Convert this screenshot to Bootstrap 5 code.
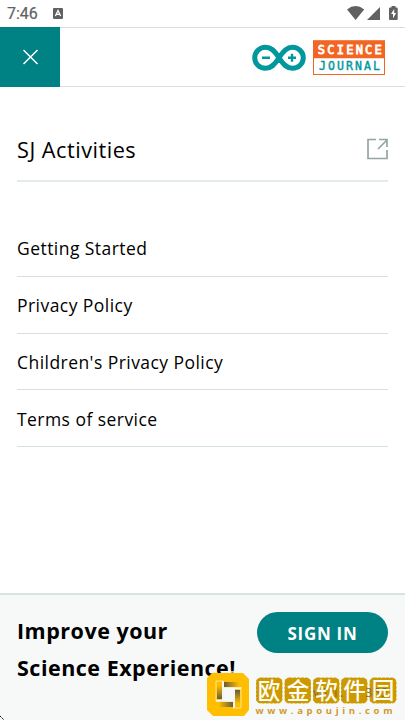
<!DOCTYPE html>
<html lang="en">
<head>
<meta charset="utf-8">
<meta name="viewport" content="width=device-width, initial-scale=1">
<title>Science Journal</title>
<link href="https://cdn.jsdelivr.net/npm/bootstrap@5.3.0/dist/css/bootstrap.min.css" rel="stylesheet">
<style>
body{font-family:"Open Sans","Noto Sans",sans-serif;color:#000;background:#fff;height:720px;overflow:hidden}
.status{height:27px;font:400 16px/28px Roboto,sans-serif;color:#616161;padding-left:7px;-webkit-text-stroke:.2px #616161}
.topbar{height:60px;border-top:1px solid #d5e1e1;border-bottom:1px solid #d5e1e1}
.close-btn{width:60px;height:60px;margin-top:-1px;padding-left:1px;background:#008184}
.menu{padding:0 17px}
.menu-line{border-bottom:1px solid #d5e1e1}
.menu-main{height:95px;border-bottom:2px solid #e2eaea;font-size:21.7px;letter-spacing:.5px;padding-top:31px}
.menu-main span{padding-top:2px}
.menu-item{height:56.75px;font-size:17.5px;letter-spacing:.45px;padding-top:1px}
.menu-list{padding-top:38px}
.signin-bar{height:127px;border-top:2px solid #dae3e3;background:#f7f9f9;padding:17px 17px 0}
.promo{font-size:21.5px;font-weight:700;line-height:37px;letter-spacing:.5px;white-space:nowrap}
.promo-text{width:240px}
.signin{width:131px;height:41px;background:#008184;font-size:17px;font-weight:700;letter-spacing:.7px;padding-top:2px!important}
.seal{left:204px;top:669px}
</style>
<script src="https://cdn.jsdelivr.net/npm/bootstrap@5.3.0/dist/js/bootstrap.bundle.min.js"></script>
</head>
<body class="d-flex flex-column position-relative">
<div class="status d-flex flex-shrink-0">
  <span class="flex-shrink-0">7:46</span>
  <svg class="ms-auto flex-shrink-0" width="355" height="27" viewBox="50 0 355 27">
    <rect x="53" y="8" width="10" height="11" rx="1" fill="#616161"/>
    <path d="M55.400 16L58 10.500 60.600 16M56.400 14.300h3.200" fill="none" stroke="#fff" stroke-width="1.300"/>
    <path d="M347 9.400q8.600-6.600 17.200 0L355.600 20z" fill="#616161"/>
    <path d="M380 7v13h-13z" fill="#616161"/>
    <path d="M389 8.500q0-1 1-1h1.500V6h4v1.500h1.200q1 0 1 1V19q0 1-1 1H390q-1 0-1-1z" fill="#616161"/>
    <path d="M394.200 9l-3.200 5h2v4.200l3.200-5.200h-2z" fill="#fff"/>
  </svg>
</div>
<header class="topbar d-flex flex-shrink-0">
  <a class="close-btn d-flex align-items-center justify-content-center" href="#" aria-label="Close">
    <svg width="16" height="16"><path d="M.5 1L14.500 15M14.500 1L.5 15" stroke="#fff" stroke-width="1.500"/></svg>
  </a>
  <svg class="ms-auto" width="165" height="58">
    <g fill="none" stroke="#00979d" stroke-width="5">
      <path d="M39 29.800C34.500 22.500 31 19.300 25.500 19.300a10.800 10.500 0 0 0 0 21C31 40.300 34.500 37 39 29.800S47 19.300 52.500 19.300a10.800 10.500 0 0 1 0 21C47 40.300 43.500 37 39 29.800z"/>
      <path d="M22 29.700h8M48 29.700h8M52 25.700v8" stroke-width="2.400"/>
    </g>
    <rect x="73.500" y="12.900" width="71" height="33.600" fill="#fff" stroke="#f26522"/>
    <path d="M73 12.400h72v17.800H73z" fill="#f26522"/>
    <g font-family="DejaVu Sans Mono,monospace">
      <text x="77.800" y="25.900" font-size="12" textLength="64" fill="#fff" stroke="#fff" stroke-width=".8">SCIENCE</text>
      <text x="79" y="42.200" font-size="11.500" textLength="61" fill="#00979d" stroke="#00979d" stroke-width=".4">JOURNAL</text>
    </g>
  </svg>
</header>
<main class="menu flex-grow-1">
  <div class="menu-main d-flex align-items-center justify-content-between"><span>SJ Activities</span>
    <svg width="21" height="22" fill="none" stroke="#95a5a6" stroke-width="1.700"><path d="M9 1.500H1V20.500H20V12M12 1.500h8V9M20 2L11 11"/></svg>
  </div>
  <nav class="menu-list">
    <div class="menu-item menu-line d-flex align-items-center">Getting Started</div>
    <div class="menu-item menu-line d-flex align-items-center">Privacy Policy</div>
    <div class="menu-item menu-line d-flex align-items-center">Children's Privacy Policy</div>
    <div class="menu-item menu-line d-flex align-items-center">Terms of service</div>
  </nav>
</main>
<footer class="signin-bar d-flex flex-shrink-0 align-items-start">
  <div class="promo promo-text">Improve your<br>Science Experience!</div>
  <a href="#" class="signin btn rounded-pill border-0 p-0 text-white d-flex align-items-center justify-content-center">SIGN IN</a>
</footer>
<svg class="seal position-absolute" width="201" height="51" viewBox="204 669 201 51">
  <defs>
    <linearGradient id="ga"><stop offset="0" stop-color="#665c3c"/><stop offset=".9" stop-color="#ffbf00"/></linearGradient>
    <linearGradient id="gb" x1="1" x2="0"><stop offset="0" stop-color="#665c3c"/><stop offset=".9" stop-color="#ffbf00"/></linearGradient>
    <linearGradient id="gc" x1="0" x2="0" y1="0" y2="1"><stop offset="0" stop-color="#665c3c"/><stop offset=".8" stop-color="#ffbf00"/></linearGradient>
    <linearGradient id="gd" x1="0" x2="0" y1="1" y2="0"><stop offset="0" stop-color="#665c3c"/><stop offset=".8" stop-color="#ffbf00"/></linearGradient>
  </defs>
  <path d="M212 673h31l6 6v31l-5 6h-31l-6-6v-32z" fill="#ffbf00"/>
  <path d="M224 682h17v5h-17z" fill="url(#ga)"/>
  <path d="M217 702h16v5h-16z" fill="url(#gb)"/>
  <path d="M217 682h5v17h-5z" fill="url(#gd)"/>
  <path d="M235 690h5v17h-5z" fill="url(#gc)"/>
  <path d="M224 688h9v13h-9z" fill="#f7f9f9"/>
  <path d="M223 681v20M224 688.200h17M234 689v19M216 700.700h17" fill="none" stroke="#f7f9f9" stroke-width="1.900"/>
  <path d="M216 701V681h7M241 687v21h-8" fill="none" stroke="#fff0b0" stroke-width=".8"/>
  <g fill="#cc9900" stroke="#cc9900" stroke-dasharray="3 1">
    <rect x="256.500" y="678" width="25.500" height="25" rx="4"/><rect x="285" y="678" width="25.500" height="25" rx="4"/><rect x="313.500" y="678" width="25.500" height="25" rx="4"/><rect x="341.500" y="678" width="25.500" height="25" rx="4"/><rect x="370" y="678" width="26" height="25" rx="4"/>
  </g>
  <text x="313" y="697" font-family="Open Sans,sans-serif" font-size="12" textLength="75" fill="#665c3c" opacity=".75">v6.1.1 - 352</text>
  <g font-family="Noto Sans CJK SC,sans-serif" font-weight="500" font-size="22.500" fill="#fffdf3" text-anchor="middle">
    <text x="269" y="699">欧</text><text x="298" y="699">金</text><text x="326.500" y="699">软</text><text x="354.500" y="699">件</text><text x="383" y="699">园</text>
  </g>
  <text x="255.500" y="713.500" font-family="Open Sans,sans-serif" font-weight="700" font-size="9.500" textLength="137" fill="#d1992e">www.apoujin.com</text>
</svg>
<svg class="position-absolute start-0 bottom-0" width="5" height="5"><path d="M0 1L4 5" stroke="#111" stroke-dasharray="2 1"/></svg>
</body>
</html>
